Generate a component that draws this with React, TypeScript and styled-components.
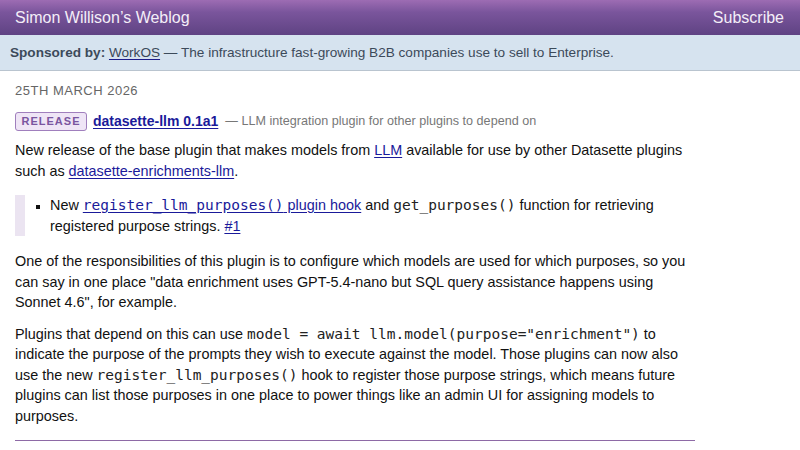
import React from "react";
import styled, { createGlobalStyle } from "styled-components";

const Global = createGlobalStyle`
  html, body { margin: 0; padding: 0; background: #fff; }
  body { font-family: "Liberation Sans", Arial, sans-serif; color: #111; }
`;

const Header = styled.header`
  display: flex;
  justify-content: space-between;
  align-items: center;
  height: 35px;
  padding: 0 16px 0 15px;
  background: linear-gradient(to bottom, #9d6cb3 0%, #7a559c 35%, #5f4383 100%);
  color: #f4eef8;
  font-size: 16px;
`;

const HeaderLink = styled.a`
  color: inherit;
  text-decoration: none;
`;

const SponsorBar = styled.div`
  height: 35px;
  line-height: 35px;
  padding: 0 10px;
  background: #d6e3ef;
  border-bottom: 1px solid #b9c4cf;
  color: #3c4a5a;
  font-size: 13.6px;
  white-space: nowrap;
`;

const SponsorLabel = styled.strong``;

const SponsorLink = styled.a`
  color: #3c4a5a;
  text-decoration: underline;
  text-decoration-color: #1c1c8a;
  text-underline-offset: 2px;
`;

const Main = styled.main`
  width: 680px;
  padding: 12px 15px 0;
  font-size: 14.4px;
  line-height: 20.5px;
`;

const DateLine = styled.div`
  font-size: 13px;
  letter-spacing: 0.5px;
  color: #666;
  text-transform: uppercase;
  line-height: 16px;
  margin-bottom: 12px;
`;

const TitleRow = styled.div`
  display: flex;
  align-items: center;
  gap: 6px;
  height: 20px;
  margin-bottom: 9px;
`;

const Badge = styled.span`
  display: inline-flex;
  align-items: center;
  justify-content: center;
  box-sizing: border-box;
  width: 72px;
  height: 19px;
  border: 1px solid #a07fbd;
  border-radius: 3px;
  background: #efe5f6;
  color: #7a55a0;
  font-size: 11px;
  font-weight: bold;
  letter-spacing: 1px;
`;

const TitleLink = styled.a`
  font-size: 14px;
  font-weight: bold;
  color: #1a1a9a;
  text-decoration: underline;
  text-underline-offset: 2px;
  margin-right: 1px;
`;

const Desc = styled.span`
  font-size: 12.6px;
  color: #777;
`;

const Para = styled.p<{ $mb?: number }>`
  margin: 0 0 ${(p) => p.$mb ?? 14}px;
`;

const Link = styled.a`
  color: #1a1a9a;
  text-decoration: underline;
  text-underline-offset: 2px;
`;

const Code = styled.code`
  font-family: "DejaVu Sans Mono", "Liberation Mono", monospace;
  font-size: 14.5px;
  color: #222;
`;

const LinkCode = styled(Code)`
  color: inherit;
`;

const Quote = styled.div`
  border-left: 10px solid #ebe4f1;
  margin: 0 0 15px;
  padding-left: 25px;
`;

const List = styled.ul`
  margin: 0;
  padding: 0;
  list-style: square;
`;

const Item = styled.li`
  &::marker { font-size: 12px; }
`;

const Rule = styled.hr`
  border: 0;
  border-top: 1px solid #8e6aa6;
  margin: 14px 0 0;
`;

export default function App() {
  return (
    <>
      <Global />
      <Header>
        <HeaderLink href="#">Simon Willison’s Weblog</HeaderLink>
        <HeaderLink href="#">Subscribe</HeaderLink>
      </Header>
      <SponsorBar>
        <SponsorLabel>Sponsored by:</SponsorLabel>{" "}
        <SponsorLink href="#">WorkOS</SponsorLink>
        {" — The infrastructure fast-growing B2B companies use to sell to Enterprise."}
      </SponsorBar>
      <Main>
        <DateLine>25th March 2026</DateLine>
        <TitleRow>
          <Badge>RELEASE</Badge>
          <TitleLink href="#">datasette-llm 0.1a1</TitleLink>
          <Desc>— LLM integration plugin for other plugins to depend on</Desc>
        </TitleRow>
        <Para>
          New release of the base plugin that makes models from <Link href="#">LLM</Link> available for use by other
          Datasette plugins such as <Link href="#">datasette-enrichments-llm</Link>.
        </Para>
        <Quote>
          <List>
            <Item>
              New <Link href="#"><LinkCode>register_llm_purposes()</LinkCode> plugin hook</Link> and{" "}
              <Code>get_purposes()</Code> function for retrieving registered purpose strings.{" "}
              <Link href="#">#1</Link>
            </Item>
          </List>
        </Quote>
        <Para $mb={11}>
          One of the responsibilities of this plugin is to configure which models are used for which purposes, so you
          can say in one place "data enrichment uses GPT-5.4-nano but SQL query assistance happens using Sonnet 4.6",
          for example.
        </Para>
        <Para $mb={0}>
          Plugins that depend on this can use <Code>model = await llm.model(purpose="enrichment")</Code> to indicate
          the purpose of the prompts they wish to execute against the model. Those plugins can now also use the new{" "}
          <Code>register_llm_purposes()</Code> hook to register those purpose strings, which means future plugins can
          list those purposes in one place to power things like an admin UI for assigning models to purposes.
        </Para>
        <Rule />
      </Main>
    </>
  );
}
